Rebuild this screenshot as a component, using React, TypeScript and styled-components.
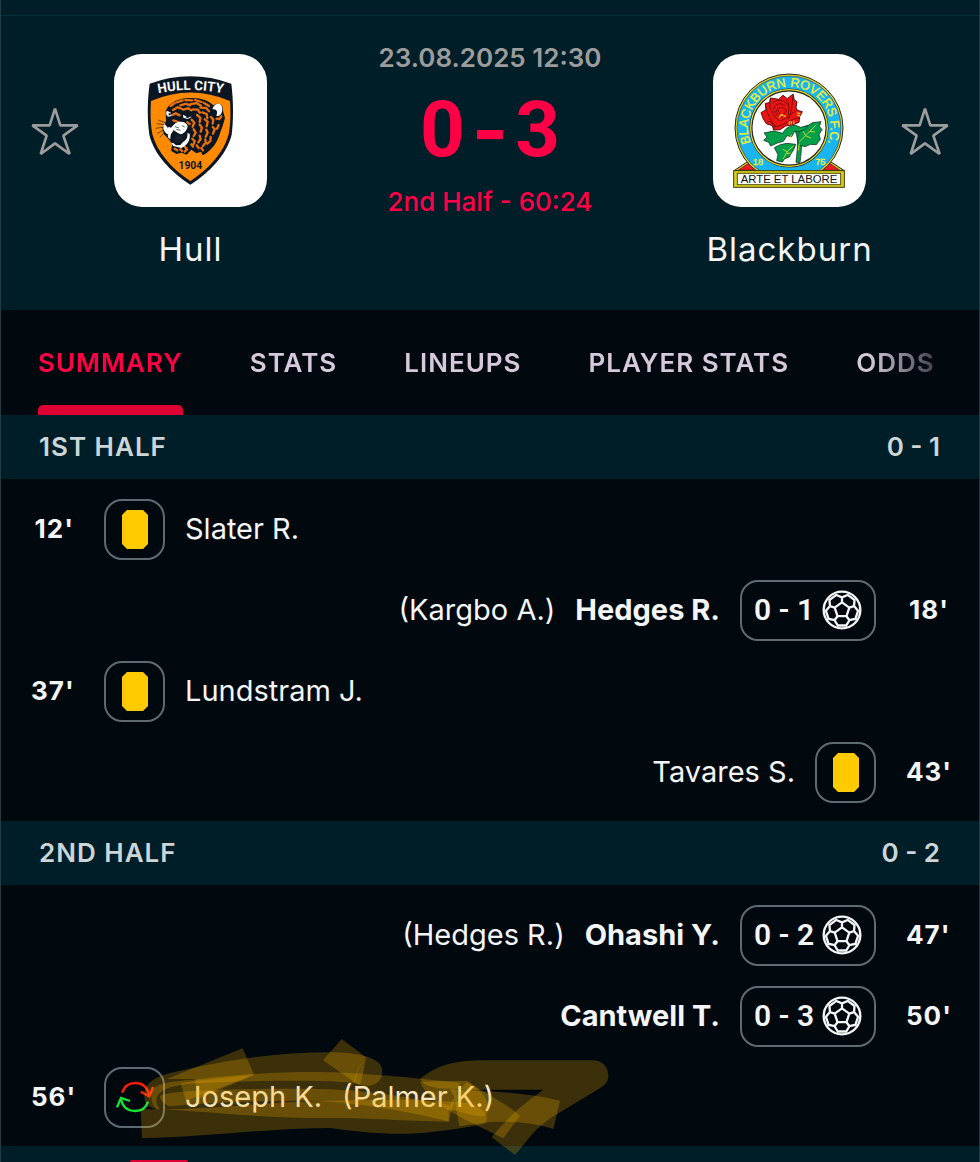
import React from "react";
import styled, { createGlobalStyle, css } from "styled-components";

const color = {
  panel: "#001e28",
  page: "#01080e",
  line: "#04303c",
  edge: "#263a42",
  outline: "#5f6b70",
  live: "#ff0046",
  marker: "#dc0033",
  text: "#f4f5f6",
  muted: "#9c9c9c",
  tab: "#d5c9da",
  section: "#ccd6d8",
  card: "#ffca00",
};

const GlobalStyle = createGlobalStyle`
  *, *::before, *::after { box-sizing: border-box; }
  body {
    margin: 0;
    background: ${color.page};
    color: ${color.text};
    font-family: Inter, "Liberation Sans", sans-serif;
  }
`;

const Page = styled.main`
  overflow: hidden;
  border: solid ${color.edge};
  border-width: 0 1px;
`;

const TopStrip = styled.div`
  height: 16px;
  background: ${color.panel};
  border-bottom: 1px solid ${color.line};
`;

const MatchHeader = styled.header`
  display: flex;
  align-items: flex-start;
  gap: 35px;
  padding: 38px 30px 41px;
  background: ${color.panel};
`;

const StarButton = styled.button`
  flex: none;
  width: 48px;
  height: 153px;
  padding: 0;
  border: 0;
  background: none;
  cursor: pointer;
  svg { display: block; width: 48px; height: 48px; }
`;

const Team = styled.section`
  flex: none;
  width: 153px;
  display: flex;
  flex-direction: column;
  align-items: center;
  gap: 22px;
`;

const CrestTile = styled.div`
  width: 153px;
  height: 153px;
  border-radius: 28px;
  background: #fff;
  overflow: hidden;
  svg { display: block; width: 100%; height: 100%; }
`;

const TeamName = styled.h2`
  margin: 0;
  font-size: 33px;
  line-height: 40px;
  font-weight: 400;
  letter-spacing: 1px;
  white-space: nowrap;
`;

const ScoreBoard = styled.div`
  flex: 1;
  display: flex;
  flex-direction: column;
  align-items: center;
  margin-top: -12px;
  white-space: nowrap;
`;

const Kickoff = styled.time`
  font-size: 26px;
  line-height: 32px;
  font-weight: 600;
  color: ${color.muted};
`;

const Score = styled.strong`
  display: flex;
  gap: 7px;
  margin: 12px 0;
  font-family: Roboto, Inter, sans-serif;
  font-size: 78px;
  line-height: 88px;
  font-weight: 700;
  color: ${color.live};
`;

const ScoreDash = styled.span`
  font-family: Inter, sans-serif;
`;

const MatchClock = styled.span`
  font-size: 26px;
  line-height: 32px;
  font-weight: 500;
  color: ${color.live};
`;

const Tabs = styled.nav`
  display: flex;
  gap: 67px;
  height: 105px;
  padding: 0 37px;
  overflow: hidden;
  mask-image: linear-gradient(to left, transparent 16px, #000 110px);
`;

const Tab = styled.button<{ $active?: boolean }>`
  flex: none;
  display: flex;
  flex-direction: column;
  justify-content: space-between;
  padding: 36px 0 0;
  border: 0;
  background: none;
  font: 600 26px/34px Inter, "Liberation Sans", sans-serif;
  letter-spacing: 1px;
  text-transform: uppercase;
  white-space: nowrap;
  cursor: pointer;
  color: ${(p) => (p.$active ? color.live : color.tab)};
  ${(p) =>
    p.$active &&
    css`
      &::after {
        content: "";
        width: 100%;
        height: 10px;
        border-radius: 5px 5px 0 0;
        background: ${color.marker};
      }
    `}
`;

const PeriodHeader = styled.h3`
  display: flex;
  justify-content: space-between;
  margin: 0;
  padding: 0 39px 0 38px;
  background: ${color.panel};
  color: ${color.section};
  font-size: 26px;
  line-height: 64px;
  font-weight: 600;
`;

const PeriodName = styled.span`
  letter-spacing: 1px;
  text-transform: uppercase;
`;

const EventList = styled.ul`
  display: flex;
  flex-direction: column;
  gap: 19px;
  margin: 0;
  padding: 19px 30px 18px;
  list-style: none;
`;

const EventRow = styled.li<{ $away?: boolean }>`
  position: relative;
  display: flex;
  flex-direction: ${(p) => (p.$away ? "row-reverse" : "row")};
  align-items: center;
  gap: 20px;
  height: 62px;
  line-height: 40px;
  white-space: nowrap;
`;

const Minute = styled.span<{ $away?: boolean }>`
  width: 43px;
  margin: ${(p) => (p.$away ? "0 0 0 10px" : "0 10px 0 0")};
  text-align: right;
  font-size: 26px;
  font-weight: 700;
  letter-spacing: 1px;
`;

const Badge = styled.span<{ $goal?: boolean }>`
  display: flex;
  align-items: center;
  justify-content: ${(p) => (p.$goal ? "space-between" : "center")};
  width: ${(p) => (p.$goal ? 136 : 61)}px;
  height: 61px;
  padding: 0 ${(p) => (p.$goal ? 12 : 0)}px;
  border: 2px solid ${color.outline};
  border-radius: 18px;
  font-family: Roboto, Inter, sans-serif;
  font-size: 30px;
  font-weight: 600;
  svg { display: block; flex: none; }
`;

const Player = styled.span<{ $scorer?: boolean }>`
  font-size: 29px;
  font-weight: ${(p) => (p.$scorer ? 700 : 400)};
`;

const Marker = styled.svg`
  position: absolute;
  top: -37px;
  left: -31px;
  width: 660px;
  height: 132px;
  pointer-events: none;
`;

const NextPeriod = styled.div`
  display: flex;
  align-items: flex-end;
  height: 16px;
  padding-left: 129px;
  background: ${color.panel};
  &::after {
    content: "";
    width: 58px;
    height: 2px;
    border-radius: 8px 8px 0 0;
    background: ${color.marker};
  }
`;

const StarIcon = () => (
  <svg viewBox="95 322 144 144" fill="none" stroke={color.muted} strokeWidth="8" strokeLinejoin="bevel" aria-hidden="true">
    <path d="M167 327 L183 377 H235 L192 408 L211 463 L167 431 L124 463 L142 408 L99 377 H151 Z" />
  </svg>
);

const CardIcon = () => (
  <svg width="26" height="39" viewBox="0 0 26 39" aria-label="Yellow card">
    <path d="M5 0 H21 L26 5 V34 L21 39 H5 L0 34 V5 Z" fill={color.card} />
  </svg>
);

const point = (radius: number, degrees: number) => {
  const a = (degrees * Math.PI) / 180;
  return `${(Math.cos(a) * radius).toFixed(1)} ${(Math.sin(a) * radius).toFixed(1)}`;
};

const seams = [0, 1, 2, 3, 4]
  .map((k) => {
    const t = -90 + 72 * k;
    return (
      `M${point(23, t)} L${point(23, t + 72)} M${point(23, t)} L${point(38, t)}` +
      `M${point(51, t - 24)} L${point(38, t)} L${point(51, t + 24)}` +
      `M${point(48, t + 22)} L${point(48, t + 50)}`
    );
  })
  .join(" ");

const BallIcon = () => (
  <svg width="40" height="40" viewBox="-60 -60 120 120" fill="none" stroke="#f4f5f6" strokeWidth="7" strokeLinejoin="round" aria-label="Goal">
    <circle r="55" />
    <path d={seams} />
  </svg>
);

const SubstitutionIcon = () => (
  <svg width="38" height="38" viewBox="346 139 114 114" fill="none" strokeWidth="7" aria-label="Substitution">
    <g stroke="#ff1e0a">
      <path d="M365 183 C370 163 387 154 404 154 C425 154 441 167 446 192" />
      <path d="M420 180 L446 194 L457 166" />
    </g>
    <g stroke="#14e832">
      <path d="M442 210 C436 229 421 238 404 238 C381 238 365 225 361 201" />
      <path d="M349 227 L361 199 L388 208" />
    </g>
  </svg>
);

const HullCrest = () => (
  <svg viewBox="342 162 459 459" role="img" aria-label="Hull City crest">
    <path d="M449 251 Q571 207 694 251 C700 300 701 355 695 404 C680 463 631 515 571 554 C511 515 462 463 448 404 C441 355 442 300 449 251 Z" fill="#0b1622" />
    <path d="M453 303 Q571 252 690 303 C692 340 692 370 686 402 C672 457 626 507 571 543 C516 507 471 457 457 402 C451 370 451 340 453 303 Z" fill="#ff8a00" />
    <path id="hull-arc" d="M460 283 Q571 257 684 283" fill="none" />
    <text fill="#fff" fontFamily="Roboto, sans-serif" fontSize="40" fontWeight="700" textAnchor="middle">
      <textPath href="#hull-arc" startOffset="50%">HULL CITY</textPath>
    </text>
    <path d="M497 333 C508 307 535 295 567 294 C602 292 625 301 640 316 C659 304 671 315 669 333 L675 354 L668 378 C660 397 657 418 642 437 C632 448 623 459 608 466 L603 455 L589 460 L574 449 L560 464 L545 458 L529 462 L513 452 L517 432 L505 416 L492 403 L487 384 L498 364 Z" fill="#0b1622" />
    <g fill="none" stroke="#e8700c" strokeWidth="7" strokeLinecap="round">
      <path d="M512 318 l12 -9 M530 307 l18 -6 M556 300 l20 1 M585 300 l20 6 M612 309 l15 9 M519 330 l14 -8 14 5 M541 316 l17 -5 12 5 M570 313 l19 -4 14 8 M601 323 l17 1 9 10 M517 345 l10 -5 12 6 M550 329 l14 -4 10 6 M579 328 l14 1 7 9 M607 337 l13 5 2 12 M591 345 l10 8 -2 13 M614 358 l9 7 -3 14 M633 351 l7 8 -2 12 M650 356 l8 1 6 -8 M575 359 l8 9 -5 12 M599 374 l7 9 -4 12 M581 388 l6 10 -6 10 M619 389 l4 9 -6 12 M638 381 l6 6 -5 14 M656 375 l-5 11 M599 407 l3 10 -7 10 M577 416 l7 8 -4 10 M616 418 l1 10 -8 10 M632 411 l-1 12 -9 8 M590 436 l6 8 M604 444 l5 7 M555 441 l6 7 -7 7 M524 446 l8 5 M541 448 l5 5 M574 433 l5 7 M520 361 l15 5 M562 367 l7 5" />
    </g>
    <path d="M641 319 C654 305 667 312 667 328 C666 343 658 351 649 347 C654 336 651 325 637 328 Z" fill="#fff" />
    <path d="M500 332 L511 337 L515 348 L504 350 L498 342 Z M549 344 L562 351 L576 350 L563 357 L550 353 Z" fill="#fff" />
    <path d="M506 340 h6 v6 h-6 Z M559 348 h7 v6 h-7 Z" fill="#0b1622" />
    <path d="M492 369 L503 383 L527 369 C545 360 560 367 563 378 C562 391 552 401 542 403 C532 399 525 393 521 390 L511 406 C500 404 490 393 489 381 Z" fill="#fff" />
    <path d="M503 364 L526 369 L513 383 L505 380 Z" fill="#0b1622" />
    <path d="M503 405 L512 403 L511 418 L505 413 Z M569 401 C572 420 562 436 544 444 L520 438 L514 429 L520 429 L528 436 L541 435 L548 427 C559 420 564 412 562 399 Z" fill="#fff" />
    <path d="M526 405 L540 407 L552 401 L548 418 L534 429 L525 424 Z" fill="#17202a" />
    <path d="M525 380 l12 4 M529 388 l13 3 M546 377 l8 4" stroke="#0b1622" strokeWidth="2" />
    <path d="M497 369 L475 360 M494 374 L470 371 M493 381 L467 385 M492 389 L471 401 M494 395 L480 412" stroke="#17202a" strokeWidth="2" />
    <text x="571" y="508" fill="#0b1622" fontFamily="Roboto, sans-serif" fontSize="31" fontWeight="700" textAnchor="middle">1904</text>
  </svg>
);

const BlackburnCrest = () => (
  <svg viewBox="189 162 459 459" role="img" aria-label="Blackburn Rovers crest">
    <path d="M252 512 L300 480 H534 L583 512 Z" fill="#d8cf20" stroke="#222" strokeWidth="3" />
    <path d="M265 510 L300 487 L330 510 Z M569 510 L535 487 L505 510 Z" fill="#ee1c25" stroke="#222" strokeWidth="1.5" />
    <circle cx="417" cy="384" r="162" fill="#e4dc20" stroke="#222" strokeWidth="3" />
    <circle cx="417" cy="384" r="156" fill="#19b5f1" stroke="#444" strokeWidth="2" />
    <circle cx="417" cy="384" r="114" fill="#fff" stroke="#222" strokeWidth="9" />
    <circle cx="417" cy="384" r="115" fill="none" stroke="#e4dc20" strokeWidth="4" />
    <path id="rovers-arc" d="M417 508 A124 124 0 1 1 418 508" fill="none" />
    <g fill="#f0ee2b" stroke="#f0ee2b" fontFamily='"Liberation Sans", sans-serif'>
      <text fontSize="38" strokeWidth="1" textAnchor="middle">
        <textPath href="#rovers-arc" startOffset="50%">BLACKBURN ROVERS F.C.</textPath>
      </text>
      <text x="324" y="495" fontSize="28" strokeWidth="1" textAnchor="middle">18</text>
      <text x="511" y="495" fontSize="28" strokeWidth="1" textAnchor="middle">75</text>
    </g>
    <g fill="#00a04a" stroke="#163c24" strokeWidth="2.5" strokeLinejoin="round">
      <path d="M433 391 C447 410 443 440 438 487 H450 C455 448 458 421 446 390 Z" />
      <path d="M443 420 C442 395 456 380 477 375 L487 368 L513 365 L508 379 L516 389 L507 403 L511 418 L499 434 L481 433 L466 440 L449 436 Z" />
      <path d="M342 399 L371 393 L398 400 C405 386 419 377 434 375 L452 382 L474 377 C466 394 447 397 434 393 L425 410 L411 407 L400 424 L382 429 L362 438 L356 427 L341 421 L351 411 Z" />
      <path d="M373 443 L391 434 L411 430 L437 433 C433 451 422 460 418 471 L404 476 L397 486 L380 482 L384 464 Z" />
    </g>
    <g fill="none" stroke="#e8e22c" strokeWidth="2.5">
      <path d="M447 427 L471 403 L497 376 M467 407 l-8 -14 M480 394 l15 2 M468 408 l15 6 M399 477 L413 453 L430 438 M411 455 l-12 -7 M410 461 l12 -2 M448 430 l-3 22 M424 404 l-4 12" />
    </g>
    <path d="M333 338 L348 329 L346 310 L360 308 L361 294 L386 298 L399 286 L412 296 L429 282 L433 300 L441 305 L438 322 L442 331 L457 335 L449 350 L447 367 L428 374 L407 378 L390 389 L371 390 L367 377 L349 371 L340 357 Z" fill="#ee1313" stroke="#541313" strokeWidth="3" strokeLinejoin="round" />
    <path d="M346 311 C348 334 356 348 371 377 M361 297 C355 318 366 346 390 364 M367 310 C383 296 404 300 414 315 M371 328 C377 305 398 309 405 319 M377 338 C384 317 400 319 410 333 M410 299 C417 314 420 327 413 346 M429 286 C425 315 427 339 414 358 M440 331 C423 340 414 355 393 362 M351 365 C365 363 376 367 371 388 M372 378 C397 384 409 361 447 353 M384 330 l10 22 15 -19 M385 349 l-13 -17" fill="none" stroke="#741010" strokeWidth="3" />
    <path d="M387 354 l7 -11 13 7 M418 364 v10 M424 363 v10 M431 362 v10 M441 338 l10 3 M441 345 l9 3" fill="none" stroke="#ffb31a" strokeWidth="4" />
    <rect x="251" y="512" width="332" height="50" fill="#d8cf20" stroke="#3d3a10" strokeWidth="3" />
    <rect x="262" y="520" width="310" height="34" fill="#fff" stroke="#55520f" strokeWidth="3" />
    <text x="417" y="549" fill="#111" fontFamily='"Liberation Sans", sans-serif' fontSize="34" textAnchor="middle">ARTE ET LABORE</text>
  </svg>
);

const strokes = [
  "M422 240 L426 327 C600 325 800 298 990 297 C1080 310 1200 322 1300 308 C1370 300 1420 292 1452 284 C1475 268 1455 235 1400 222 C1250 206 1000 212 800 224 C650 236 540 243 422 240 Z",
  "M433 200 C433 160 470 142 520 130 C650 100 800 70 1000 70 C1100 72 1147 95 1147 125 C1147 165 1110 182 1064 162 C960 152 760 154 590 163 C480 170 450 200 480 243 C440 235 433 220 433 200 Z",
  "M455 190 C460 160 520 158 600 150 C740 132 900 126 1000 130 C1160 138 1260 148 1380 162 L1345 278 C1200 276 1100 266 990 267 C800 268 650 250 470 240 C455 228 452 210 455 190 Z",
  "M480 200 C520 180 800 178 960 180 C1130 184 1270 215 1345 228 L1347 278 C1200 240 1060 222 960 216 C800 212 600 222 510 232 C490 225 480 212 480 200 Z",
  "M542 162 L590 155 L762 137 C680 170 620 190 558 215 Z",
  "M500 150 L728 58 L762 137 L590 212 L586 150 Z",
  "M1025 30 L1098 85 L1093 110 L1080 108 L1064 160 L969 94 Z",
  "M1080 106 L1094 112 L1080 168 L1060 160 Z",
  "M1260 150 C1310 108 1370 94 1440 94 L1775 94 C1810 94 1825 115 1825 142 C1825 162 1810 172 1790 184 L1660 262 C1600 300 1580 340 1545 378 L1475 325 C1540 245 1600 200 1683 148 L1686 182 L1400 182 C1340 176 1280 185 1260 150 Z",
  "M1350 180 C1460 190 1560 185 1680 215 L1660 300 C1560 270 1470 275 1378 292 L1363 205 Z",
  "M1260 158 L1400 155 C1460 195 1520 225 1560 260 L1510 328 C1430 285 1290 235 1260 158 Z",
  "M1400 158 C1440 180 1475 215 1462 252 C1450 275 1400 250 1340 240 Z",
];

const Highlighter = () => (
  <Marker viewBox="0 0 1980 396" aria-hidden="true">
    {strokes.map((d) => (
      <path key={d} d={d} fill="#ffb400" fillOpacity="0.23" />
    ))}
  </Marker>
);

type MatchEvent = {
  minute: string;
  away?: boolean;
  kind: "card" | "goal" | "sub";
  player: string;
  other?: string;
  score?: string;
  marked?: boolean;
};

const periods: { name: string; score: string; events: MatchEvent[] }[] = [
  {
    name: "1st half",
    score: "0 - 1",
    events: [
      { minute: "12'", kind: "card", player: "Slater R." },
      { minute: "18'", kind: "goal", player: "Hedges R.", other: "Kargbo A.", score: "0 - 1", away: true },
      { minute: "37'", kind: "card", player: "Lundstram J." },
      { minute: "43'", kind: "card", player: "Tavares S.", away: true },
    ],
  },
  {
    name: "2nd half",
    score: "0 - 2",
    events: [
      { minute: "47'", kind: "goal", player: "Ohashi Y.", other: "Hedges R.", score: "0 - 2", away: true },
      { minute: "50'", kind: "goal", player: "Cantwell T.", score: "0 - 3", away: true },
      { minute: "56'", kind: "sub", player: "Joseph K.", other: "Palmer K.", marked: true },
    ],
  },
];

const tabs = ["Summary", "Stats", "Lineups", "Player stats", "Odds"];

const EventItem = ({ event }: { event: MatchEvent }) => (
  <EventRow $away={event.away}>
    <Minute $away={event.away}>{event.minute}</Minute>
    <Badge $goal={event.kind === "goal"}>
      {event.score && <span>{event.score}</span>}
      {event.kind === "card" && <CardIcon />}
      {event.kind === "goal" && <BallIcon />}
      {event.kind === "sub" && <SubstitutionIcon />}
    </Badge>
    <Player $scorer={event.kind === "goal"}>{event.player}</Player>
    {event.other && <Player>({event.other})</Player>}
    {event.marked && <Highlighter />}
  </EventRow>
);

export default function App() {
  return (
    <>
      <GlobalStyle />
      <Page>
        <TopStrip />
        <MatchHeader>
          <StarButton aria-label="Follow Hull"><StarIcon /></StarButton>
          <Team>
            <CrestTile><HullCrest /></CrestTile>
            <TeamName>Hull</TeamName>
          </Team>
          <ScoreBoard>
            <Kickoff dateTime="2025-08-23T12:30">23.08.2025 12:30</Kickoff>
            <Score><span>0</span><ScoreDash>-</ScoreDash><span>3</span></Score>
            <MatchClock>2nd Half - 60:24</MatchClock>
          </ScoreBoard>
          <Team>
            <CrestTile><BlackburnCrest /></CrestTile>
            <TeamName>Blackburn</TeamName>
          </Team>
          <StarButton aria-label="Follow Blackburn"><StarIcon /></StarButton>
        </MatchHeader>
        <Tabs>
          {tabs.map((name, i) => (
            <Tab key={name} type="button" $active={i === 0}>{name}</Tab>
          ))}
        </Tabs>
        {periods.map((period) => (
          <section key={period.name}>
            <PeriodHeader>
              <PeriodName>{period.name}</PeriodName>
              <span>{period.score}</span>
            </PeriodHeader>
            <EventList>
              {period.events.map((event) => (
                <EventItem key={event.minute} event={event} />
              ))}
            </EventList>
          </section>
        ))}
        <NextPeriod />
      </Page>
    </>
  );
}
